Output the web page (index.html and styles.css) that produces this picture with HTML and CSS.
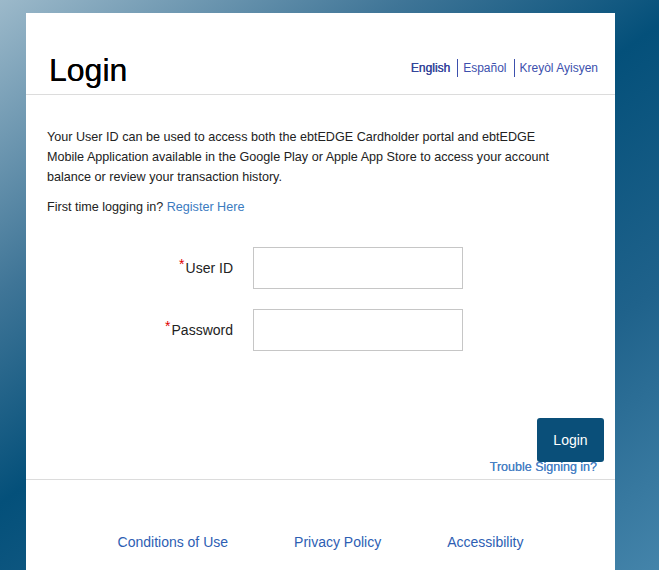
FILE: index.html
```html
<!DOCTYPE html>
<html lang="en">
<head>
<meta charset="utf-8">
<title>Login</title>
<link rel="stylesheet" href="styles.css">
</head>
<body>
<div class="card">
  <header class="card-header">
    <h1 class="title">Login</h1>
    <nav class="langs">
      <a class="lang active" href="#">English</a>
      <a class="lang sep" href="#">Español</a>
      <a class="lang sep" href="#">Kreyòl Ayisyen</a>
    </nav>
  </header>
  <section class="intro">
    <p class="desc">Your User ID can be used to access both the ebtEDGE Cardholder portal and ebtEDGE Mobile Application available in the Google Play or Apple App Store to access your account balance or review your transaction history.</p>
    <p class="first">First time logging in? <a class="reg" href="#">Register Here</a></p>
  </section>
  <form class="form">
    <label class="label" for="uid"><span class="req">*</span>User ID</label>
    <input class="field" id="uid" type="text">
    <label class="label" for="pwd"><span class="req">*</span>Password</label>
    <input class="field" id="pwd" type="password">
  </form>
  <div class="actions">
    <button class="btn" type="button">Login</button>
    <a class="trouble" href="#">Trouble Signing in?</a>
  </div>
  <footer class="footer">
    <a class="flink" href="#">Conditions of Use</a>
    <a class="flink" href="#">Privacy Policy</a>
    <a class="flink" href="#">Accessibility</a>
  </footer>
</div>
</body>
</html>
```
FILE: styles.css
```css
html, body {
  margin: 0;
  padding: 0;
  height: 100%;
  overflow: hidden;
}
body {
  background: linear-gradient(144deg, #9cb9ca 0%, #3f7597 28%, #04507a 48%, #1f628b 73%, #4484aa 100%);
  font-family: "Liberation Sans", Arial, sans-serif;
  color: #222;
}
.card {
  background: #fff;
  margin: 13px 0 0 26px;
  width: 589px;
  min-height: 600px;
}
.card-header {
  display: flex;
  justify-content: space-between;
  align-items: flex-start;
  padding: 41px 17px 8px 23px;
  border-bottom: 1px solid #dcdcdc;
}
.title {
  margin: 0;
  font-size: 32px;
  line-height: 32px;
  font-weight: normal;
  color: #000;
  text-shadow: 0 0 0.6px #000;
}
.langs {
  display: flex;
  margin-top: 5px;
}
.lang {
  font-size: 12px;
  line-height: 18px;
  color: #3c50ad;
  text-decoration: none;
}
.lang.active {
  color: #34449a;
  text-shadow: 0.35px 0 0 #34449a;
  padding-right: 7px;
}
.lang.sep {
  border-left: 1px solid #3c50ad;
  padding-left: 5px;
  padding-right: 7px;
}
.lang.sep:last-child {
  padding-right: 0;
}
.intro {
  padding: 32px 0 0 21px;
}
.desc {
  margin: 0;
  max-width: 515px;
  font-size: 12.6px;
  line-height: 20px;
}
.first {
  margin: 10px 0 0;
  font-size: 12.6px;
  line-height: 20px;
}
.reg {
  color: #3b7bbf;
  text-decoration: none;
}
.form {
  display: grid;
  grid-template-columns: 206px 210px;
  column-gap: 20px;
  row-gap: 20px;
  align-items: center;
  margin-top: 30px;
  padding-left: 1px;
}
.label {
  text-align: right;
  font-size: 14px;
  color: #222;
}
.req {
  color: #e00000;
  font-size: 14px;
  vertical-align: 4px;
  line-height: 0;
  margin-right: 1px;
}
.field {
  box-sizing: border-box;
  width: 210px;
  height: 42px;
  border: 1px solid #c6c6c6;
  margin: 0;
  padding: 0 8px;
  font-size: 14px;
}
.actions {
  display: flex;
  flex-direction: column;
  align-items: flex-end;
  padding: 67px 11px 4px 0;
  border-bottom: 1px solid #dcdcdc;
}
.btn {
  width: 67px;
  height: 44px;
  background: #0a4f79;
  color: #fff;
  border: none;
  border-radius: 3px;
  font-family: "Liberation Sans", Arial, sans-serif;
  font-size: 14px;
  padding: 0;
}
.trouble {
  margin-top: -2px;
  margin-right: 7px;
  font-size: 12.5px;
  line-height: 15px;
  color: #4a80c4;
  text-shadow: 0 0 0.4px #4a80c4;
  text-decoration: none;
}
.footer {
  display: flex;
  justify-content: center;
  gap: 66px;
  padding-top: 54px;
}
.flink {
  font-size: 14px;
  line-height: 16px;
  color: #2d5eb3;
  text-decoration: none;
}
```
